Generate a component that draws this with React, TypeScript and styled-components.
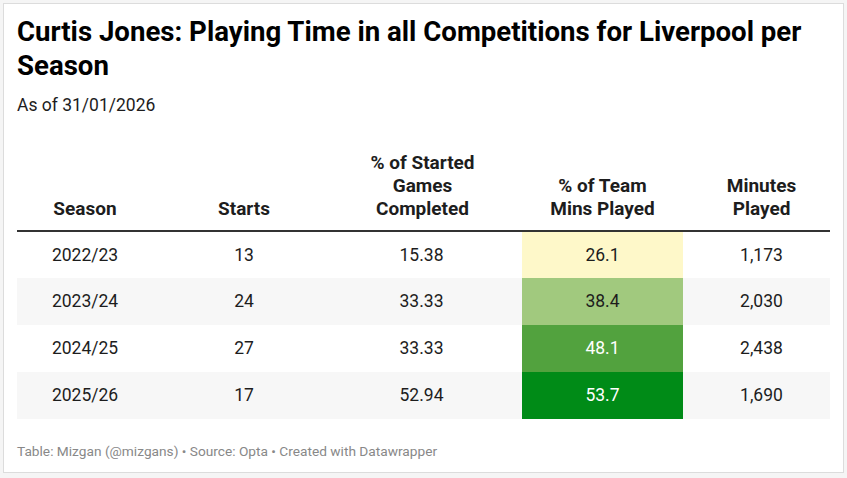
import styled, { createGlobalStyle } from 'styled-components';

const GlobalStyle = createGlobalStyle`
  * {
    box-sizing: border-box;
  }
  body {
    margin: 0;
    background: #f5f5f5;
    font-family: Roboto, 'Liberation Sans', sans-serif;
  }
`;

type Row = {
  season: string;
  starts: number;
  completed: string;
  teamMins: string;
  minutes: string;
};

const rows: Row[] = [
  { season: '2022/23', starts: 13, completed: '15.38', teamMins: '26.1', minutes: '1,173' },
  { season: '2023/24', starts: 24, completed: '33.33', teamMins: '38.4', minutes: '2,030' },
  { season: '2024/25', starts: 27, completed: '33.33', teamMins: '48.1', minutes: '2,438' },
  { season: '2025/26', starts: 17, completed: '52.94', teamMins: '53.7', minutes: '1,690' },
];

// heat colours for the "% of Team Mins Played" column
const heat: Record<string, { bg: string; fg: string }> = {
  '26.1': { bg: '#fef8c9', fg: '#1d1d1d' },
  '38.4': { bg: '#a1c97e', fg: '#1d1d1d' },
  '48.1': { bg: '#52a23e', fg: '#ffffff' },
  '53.7': { bg: '#008b17', fg: '#ffffff' },
};

const App = () => {
  return (
    <>
      <GlobalStyle />
      <Card>
        <Title>Curtis Jones: Playing Time in all Competitions for Liverpool per Season</Title>
        <Subtitle>As of 31/01/2026</Subtitle>
        <Table>
          <colgroup>
            <col style={{ width: 136 }} />
            <col style={{ width: 182 }} />
            <col style={{ width: 187 }} />
            <col style={{ width: 161 }} />
            <col style={{ width: 147 }} />
          </colgroup>
          <thead>
            <tr>
              <HeadCell>Season</HeadCell>
              <HeadCell>Starts</HeadCell>
              <HeadCell $shift={-6}>
                % of Started
                <br />
                Games
                <br />
                Completed
              </HeadCell>
              <HeadCell>
                % of Team
                <br />
                Mins Played
              </HeadCell>
              <HeadCell $shift={5}>
                Minutes
                <br />
                Played
              </HeadCell>
            </tr>
          </thead>
          <tbody>
            {rows.map((row, index) => (
              <BodyRow key={row.season} $striped={index % 2 === 1}>
                <Cell>{row.season}</Cell>
                <Cell>{row.starts}</Cell>
                <Cell $shift={-7}>{row.completed}</Cell>
                <HeatCell $bg={heat[row.teamMins].bg} $fg={heat[row.teamMins].fg}>
                  {row.teamMins}
                </HeatCell>
                <Cell $shift={5}>{row.minutes}</Cell>
              </BodyRow>
            ))}
          </tbody>
        </Table>
        <Footer>Table: Mizgan (@mizgans) • Source: Opta • Created with Datawrapper</Footer>
      </Card>
    </>
  );
};

const Card = styled.div`
  margin: 3px;
  width: 841px;
  height: 470px;
  background: #ffffff;
  border: 1px solid #dcdcdc;
  padding: 11px 13px 0 13px;
  display: flex;
  flex-direction: column;
`;

const Title = styled.h1`
  margin: 0;
  font-size: 27.6px;
  line-height: 34px;
  font-weight: 700;
  color: #000000;
`;

const Subtitle = styled.p`
  margin: 10px 0 0;
  font-size: 17.5px;
  line-height: 24px;
  color: #1d1d1d;
`;

const Table = styled.table`
  margin-top: 26px;
  width: 813px;
  border-collapse: collapse;
  table-layout: fixed;
`;

const HeadCell = styled.th<{ $shift?: number }>`
  vertical-align: bottom;
  text-align: center;
  font-size: 19px;
  line-height: 23px;
  font-weight: 700;
  color: #1d1d1d;
  padding: 8px 0 10px;
  border-bottom: 2px solid #333333;
  position: relative;
  left: ${(p) => p.$shift ?? 0}px;
`;

const BodyRow = styled.tr<{ $striped: boolean }>`
  background: ${(p) => (p.$striped ? '#f7f7f7' : '#ffffff')};
  & + & td {
    border-top: 1px solid #e6e6e6;
  }
`;

const Cell = styled.td<{ $shift?: number }>`
  height: 47px;
  padding: 0;
  text-align: center;
  font-size: 17.5px;
  line-height: 23px;
  color: #1d1d1d;
  text-indent: ${(p) => (p.$shift ?? 0) * 2}px;
`;

const HeatCell = styled.td<{ $bg: string; $fg: string }>`
  height: 47px;
  padding: 0;
  text-align: center;
  font-size: 17.5px;
  line-height: 23px;
  background: ${(p) => p.$bg};
  color: ${(p) => p.$fg};
  tr + tr & {
    border-top-color: ${(p) => p.$bg};
  }
`;

const Footer = styled.p`
  margin: 22px 0 0;
  font-size: 13.7px;
  line-height: 20px;
  color: #888888;
`;

export default App;
